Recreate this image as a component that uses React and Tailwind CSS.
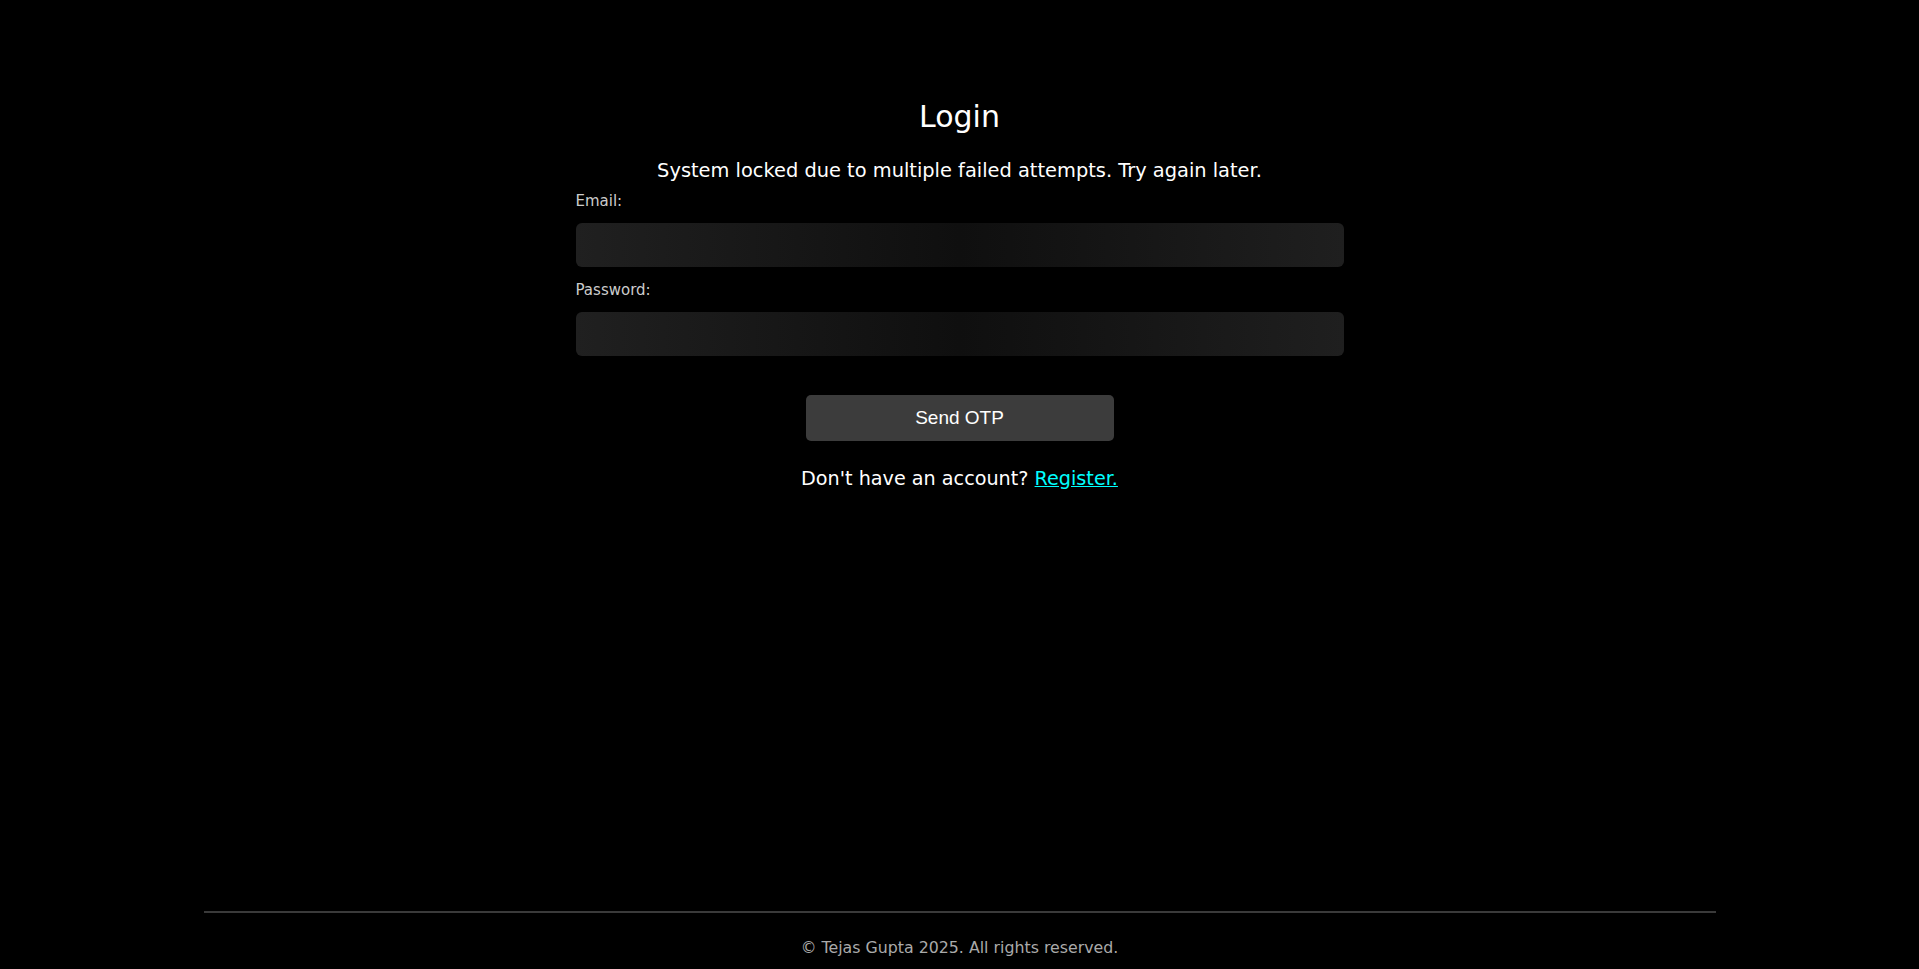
export default function App() {
  const font = { fontFamily: '"DejaVu Sans", Verdana, sans-serif' }

  return (
    <div className="bg-black min-h-screen h-[969px] flex flex-col text-white" style={font}>
      <main className="flex-1 flex flex-col items-center pt-[99px]">
        <h2 className="text-[30px] leading-[36px] font-normal">Login</h2>
        <p className="mt-[24px] text-[19.4px] leading-[24px]">
          System locked due to multiple failed attempts. Try again later.
        </p>
        <form className="w-[768px] mt-[8px] flex flex-col" onSubmit={e => e.preventDefault()}>
          <label className="text-[15px] leading-[20px] text-[#cccccc]">Email:</label>
          <input
            type="email"
            className="mt-[12px] h-[44px] rounded-[6px] bg-linear-to-r from-[#202020] via-[#0f0f0f] to-[#1f1f1f] outline-none px-3 text-white"
          />
          <label className="mt-[13px] text-[15px] leading-[20px] text-[#cccccc]">Password:</label>
          <input
            type="password"
            className="mt-[12px] h-[44px] rounded-[6px] bg-linear-to-r from-[#202020] via-[#0f0f0f] to-[#1f1f1f] outline-none px-3 text-white"
          />
          <button
            type="submit"
            className="mt-[39px] self-center w-[308px] h-[46px] rounded-[5px] bg-[#3c3c3c] text-white text-[19px]"
            style={{ fontFamily: '"Liberation Sans", Arial, sans-serif' }}
          >
            Send OTP
          </button>
        </form>
        <p className="mt-[27px] text-[19.2px] leading-[22px]">
          Don't have an account?{" "}
          <a href="#" className="text-[#00ffff] underline">Register.</a>
        </p>
      </main>
      <footer className="w-[1512px] mx-auto border-t-2 border-[#3a3a3a] pt-[26px] pb-[12px] text-center">
        <p className="text-[15.8px] leading-[18px] text-[#aaaaaa]">© Tejas Gupta 2025. All rights reserved.</p>
      </footer>
    </div>
  )
}
